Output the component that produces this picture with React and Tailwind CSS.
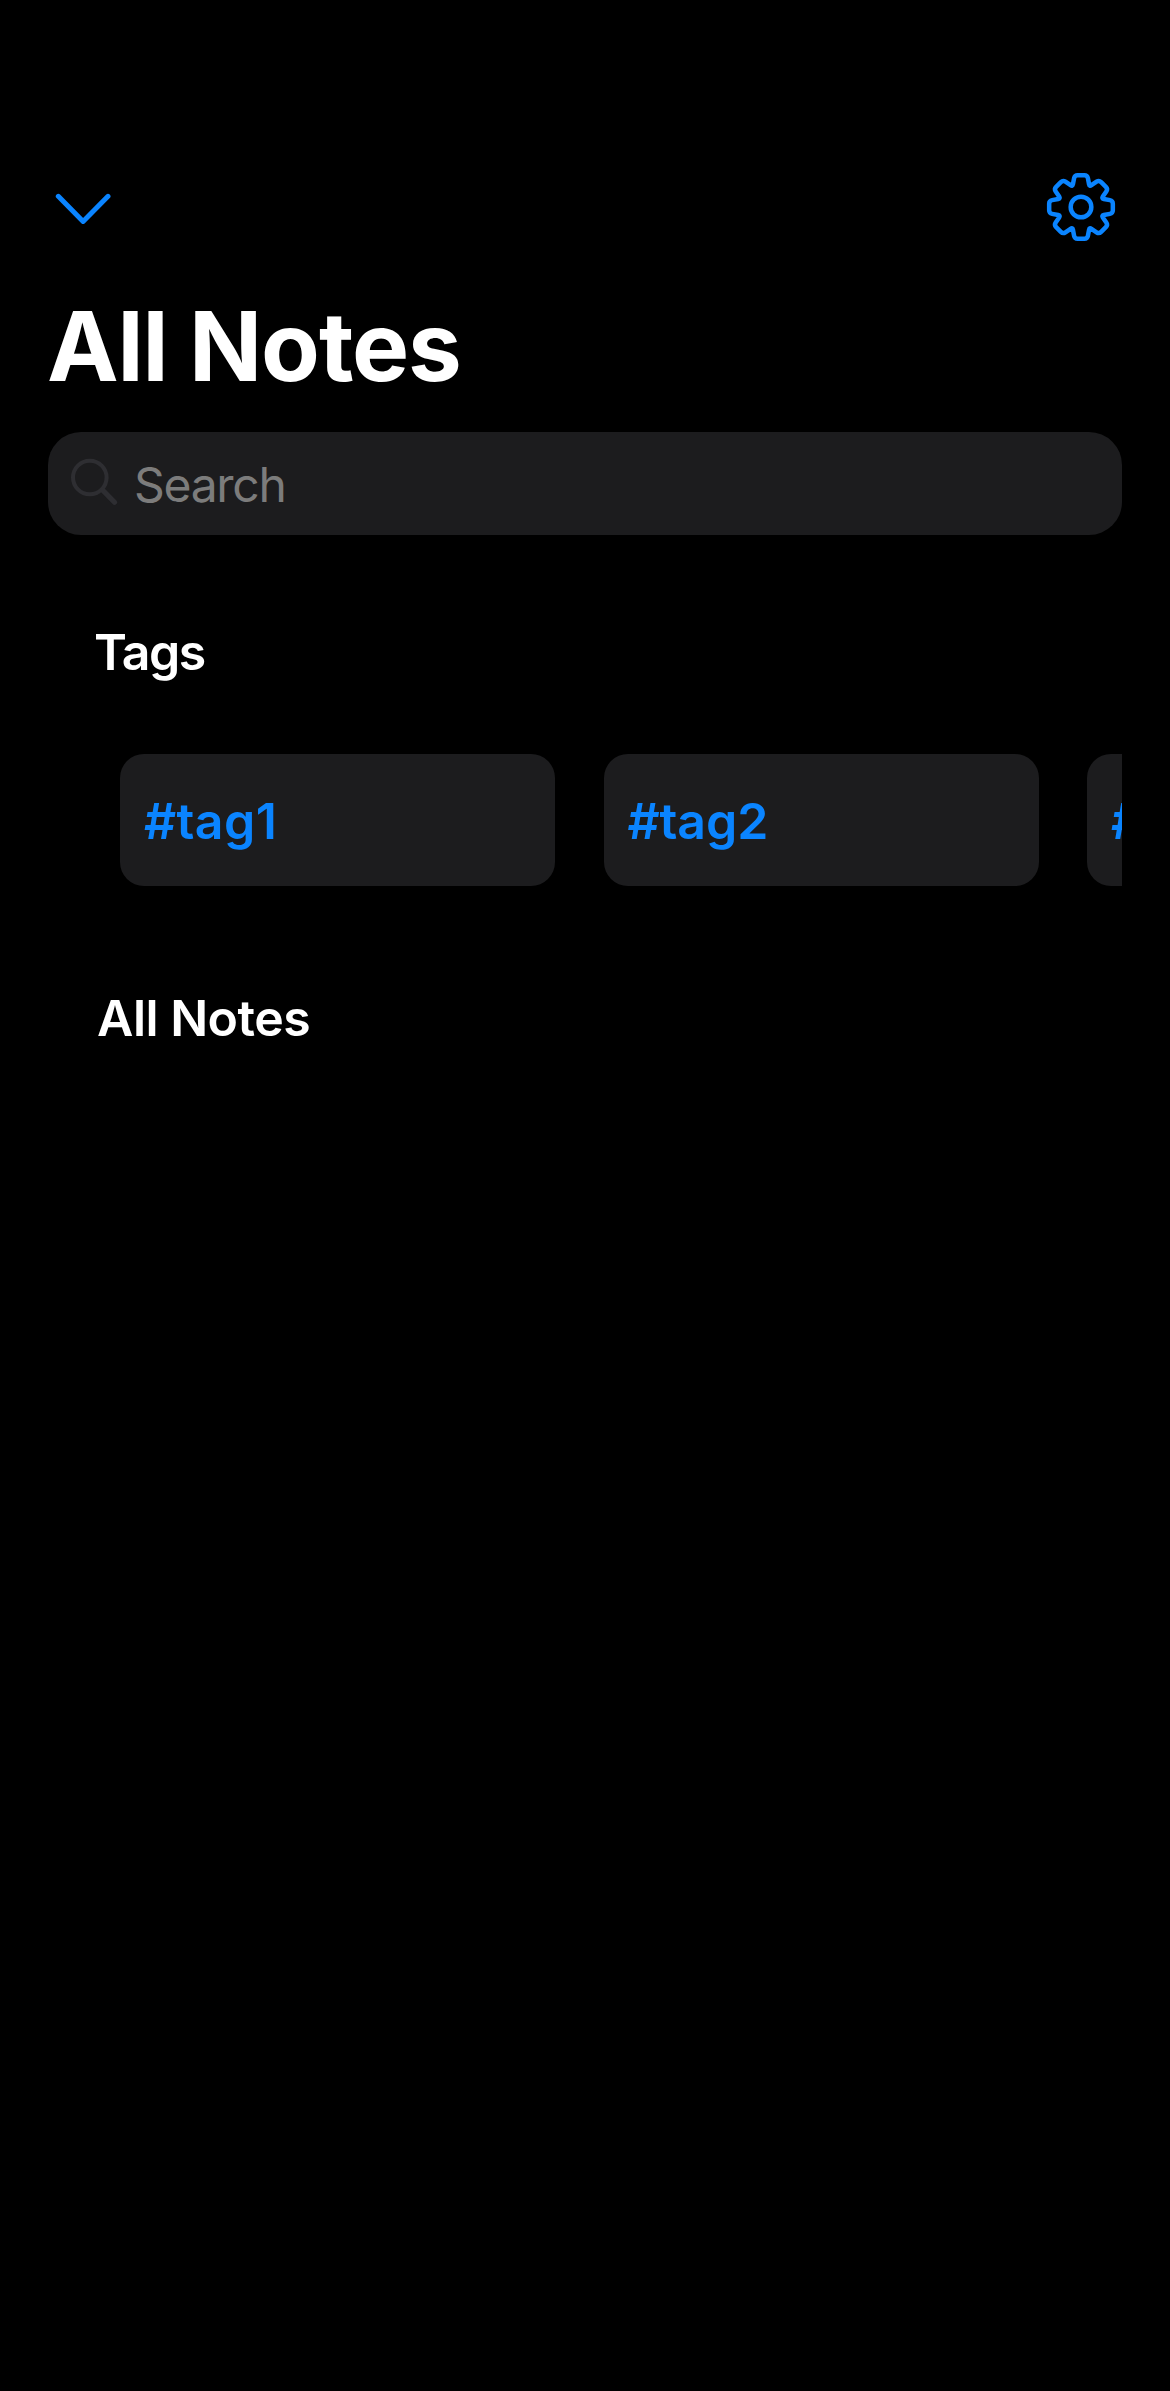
const TAGS = [
  { name: "#tag1", tracking: "tracking-[0.4px]" },
  { name: "#tag2", tracking: "tracking-[-0.1px]" },
  { name: "#tag3", tracking: "tracking-[-0.1px]" },
];

// One eighth of the gear: tooth top-left, tooth top-right, valley.
const EIGHTH = [
  [-19, -95.5, 9],
  [19, -95.5, 9],
  [25.5, -61.5, 7],
];

function gearPath() {
  const pts = [];
  for (let i = 0; i < 8; i++) {
    const a = (i * Math.PI) / 4;
    for (const [x, y, r] of EIGHTH) {
      pts.push([x * Math.cos(a) - y * Math.sin(a), x * Math.sin(a) + y * Math.cos(a), r]);
    }
  }
  const toward = (p, q, d) => {
    const len = Math.hypot(q[0] - p[0], q[1] - p[1]);
    return [p[0] + ((q[0] - p[0]) * d) / len, p[1] + ((q[1] - p[1]) * d) / len];
  };
  const fmt = (p) => p[0].toFixed(2) + " " + p[1].toFixed(2);
  return (
    pts
      .map((p, i) => {
        const prev = pts[(i + pts.length - 1) % pts.length];
        const next = pts[(i + 1) % pts.length];
        return `${i ? "L" : "M"}${fmt(toward(p, prev, p[2]))}Q${fmt(p)} ${fmt(toward(p, next, p[2]))}`;
      })
      .join("") + "Z"
  );
}

const GEAR = gearPath();

function ChevronDown() {
  return (
    <svg width="56" height="32" viewBox="0 0 56 32" fill="none" stroke="#0a84ff" strokeWidth="5" strokeLinecap="round" strokeLinejoin="round">
      <path d="M3.3 3.3L28.1 28.4L53 3.3" />
    </svg>
  );
}

function Gear() {
  return (
    <svg width="70" height="70" viewBox="-105 -105 210 210" fill="none" stroke="#0a84ff" strokeWidth="13.5" strokeLinejoin="round">
      <path d={GEAR} />
      <circle r="31" />
    </svg>
  );
}

function SearchIcon() {
  return (
    <svg className="mb-[3px] shrink-0" width="48" height="48" viewBox="0 0 48 48" fill="none" stroke="#2e2e32" strokeLinecap="round">
      <circle cx="19.8" cy="19.5" r="16.8" strokeWidth="4" />
      <path d="M32.5 32L44.5 44.2" strokeWidth="5.2" />
    </svg>
  );
}

export default function App() {
  return (
    <div className="flex h-[2391px] w-[1170px] flex-col overflow-hidden bg-black px-12 font-[Inter,sans-serif] text-white">
      <header className="mt-[172px] flex h-[70px] items-center justify-between pr-[6px] pl-[7px]">
        <button aria-label="Close" className="mt-[3px]"><ChevronDown /></button>
        <button aria-label="Settings"><Gear /></button>
      </header>
      <h1 className="mt-[46px] -ml-px h-[116px] text-[96px] leading-[116px] font-bold tracking-[-1.1px] whitespace-nowrap">All Notes</h1>
      <div className="mt-[28px] flex h-[103px] items-center rounded-[33px] bg-[#1c1c1e] pl-[22px]">
        <SearchIcon />
        <input
          aria-label="Search"
          placeholder="Search"
          className="mt-[2px] ml-[16px] h-[62px] w-[600px] bg-transparent text-[48px] tracking-[-1.3px] outline-none placeholder:text-[#7c7c7c]"
        />
      </div>
      <h2 className="mt-[87px] ml-[46px] h-[60px] text-[50px] leading-[60px] font-semibold tracking-[-1.5px]">Tags</h2>
      <div className="mt-[72px] flex gap-[48.5px] overflow-hidden pl-[72px]">
        {TAGS.map(({ name, tracking }) => (
          <div key={name} className="flex h-[132px] w-[435px] shrink-0 items-center rounded-3xl bg-[#1c1c1e] pt-[2px] pl-6 text-[50px] font-semibold text-[#0a84ff]">
            <span className={tracking}>{name}</span>
          </div>
        ))}
      </div>
      <h2 className="mt-[102px] ml-[49px] h-[60px] text-[50px] leading-[60px] font-semibold tracking-[-0.5px]">All Notes</h2>
    </div>
  );
}
